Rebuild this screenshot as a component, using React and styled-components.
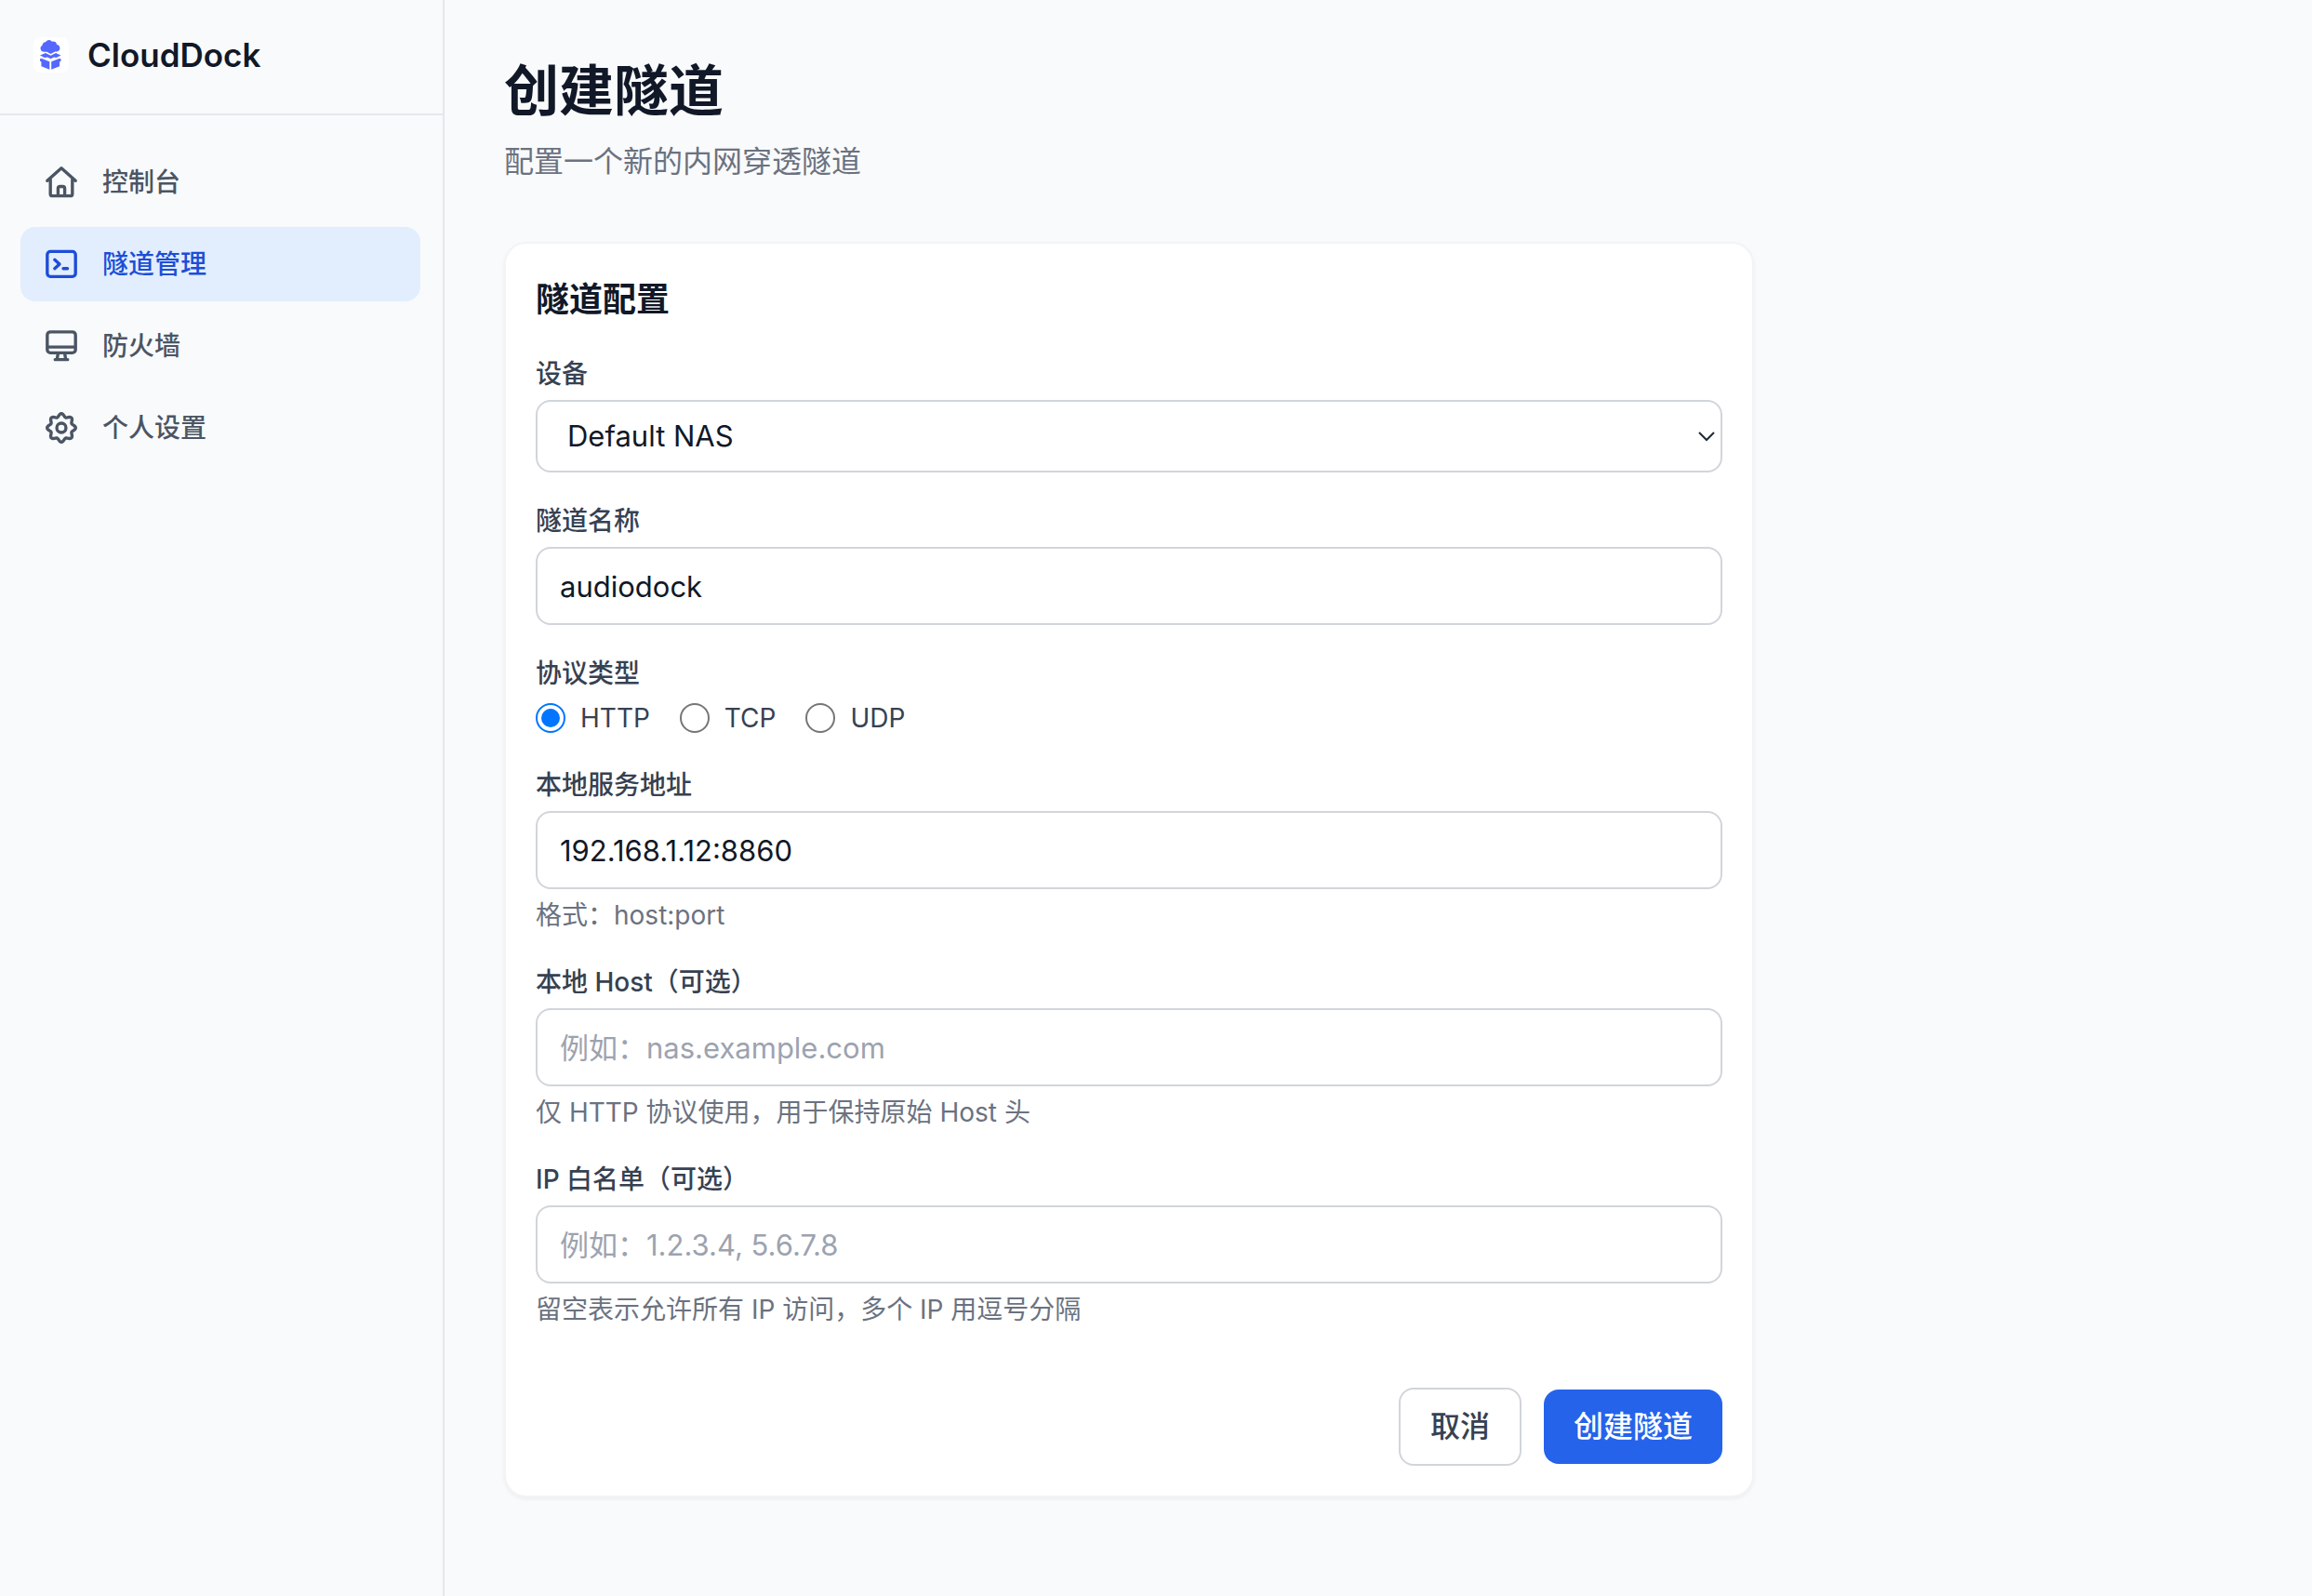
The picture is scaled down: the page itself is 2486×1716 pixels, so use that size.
import React from 'react'

import styled, { createGlobalStyle } from 'styled-components'

export default () =>
  <StyledPage>
    <GlobalStyle />
    <StyledSidebar>
      <StyledBrand>
        <Logo />
        <StyledBrandName>CloudDock</StyledBrandName>
      </StyledBrand>
      <StyledNav>
        <NavItem icon={<House />} label="控制台" />
        <NavItem icon={<Terminal />} label="隧道管理" active />
        <NavItem icon={<Display />} label="防火墙" />
        <NavItem icon={<Gear />} label="个人设置" />
      </StyledNav>
    </StyledSidebar>
    <StyledMain>
      <StyledH1>创建隧道</StyledH1>
      <StyledSubtitle>配置一个新的内网穿透隧道</StyledSubtitle>
      <StyledCard onSubmit={e => e.preventDefault()}>
        <StyledH2>隧道配置</StyledH2>
        <Field id="device" label="设备">
          <StyledSelectWrap>
            <StyledSelect id="device" defaultValue="default">
              <option value="default">Default NAS</option>
            </StyledSelect>
            <StyledChevron viewBox="0 0 20 12">
              <path d="M2 2l8 8 8-8" />
            </StyledChevron>
          </StyledSelectWrap>
        </Field>
        <Field id="name" label="隧道名称">
          <StyledInput id="name" defaultValue="audiodock" />
        </Field>
        <StyledFieldset>
          <StyledLegend>协议类型</StyledLegend>
          <StyledRadios>
            {['HTTP', 'TCP', 'UDP'].map(protocol =>
              <StyledRadioLabel key={protocol}>
                <StyledRadio name="protocol" value={protocol} defaultChecked={protocol === 'HTTP'} />
                {protocol}
              </StyledRadioLabel>
            )}
          </StyledRadios>
        </StyledFieldset>
        <Field id="address" label="本地服务地址" hint="格式：host:port">
          <StyledInput id="address" defaultValue="192.168.1.12:8860" />
        </Field>
        <Field id="host" label="本地 Host（可选）" hint="仅 HTTP 协议使用，用于保持原始 Host 头">
          <StyledInput id="host" placeholder="例如：nas.example.com" />
        </Field>
        <Field id="whitelist" label="IP 白名单（可选）" hint="留空表示允许所有 IP 访问，多个 IP 用逗号分隔">
          <StyledInput id="whitelist" placeholder="例如：1.2.3.4, 5.6.7.8" />
        </Field>
        <StyledActions>
          <StyledCancel type="button">取消</StyledCancel>
          <StyledSubmit type="submit">创建隧道</StyledSubmit>
        </StyledActions>
      </StyledCard>
    </StyledMain>
  </StyledPage>

const NavItem = ({ icon, label, active }) =>
  <StyledNavItem href="#" $active={active}>
    {icon}
    <span>{label}</span>
  </StyledNavItem>

const Field = ({ id, label, hint, children }) =>
  <StyledField>
    <StyledLabel htmlFor={id}>{label}</StyledLabel>
    {children}
    {hint && <StyledHint>{hint}</StyledHint>}
  </StyledField>

const Logo = () =>
  <StyledLogo viewBox="0 0 38 38">
    <path d="M10.500 15.500A3.600 3.600 0 0 1 9.500 8.700 4 4 0 0 1 13 5.200a4 4 0 0 1 7-.4 3.500 3.500 0 0 1 5 3.200 3.800 3.800 0 0 1 1 7.300c-1.500.4-2.600 0-3.700.6L18.500 18l-4-2.200c-1.200-.4-2.700.1-4-.3z" />
    <path d="M7 19.500l6-2.500 5.500 2.700L24 17l5.500 2.500-5 2.500-2.500-.5-3.500 1.800-3.500-1.800-3 .5z" />
    <path d="M7 23.200l2-.2 8.300 3.200v8.600L8.400 31.300V26.500L7 25.500z" />
    <path d="M29.500 23.200l-2-.2-8.300 3.200v8.600l8.900-3.500v-4.800l1.400-1z" />
  </StyledLogo>

const House = () =>
  <StyledIcon viewBox="0 0 16 16">
    <path d="M1.250 7.250L8 1.250l6.750 6M2.750 6.500v7a1 1 0 0 0 1 1h8.500a1 1 0 0 0 1-1v-7M6.400 14.250V11a1 1 0 0 1 1-1h1.200a1 1 0 0 1 1 1v3.250" />
  </StyledIcon>

const Terminal = () =>
  <StyledIcon viewBox="0 0 16 16">
    <rect x="1.250" y="1.950" width="13.500" height="12" rx="1.500" />
    <path d="M4.800 5.900l2.300 2.100-2.300 2.100M8.900 10.100h2" />
  </StyledIcon>

const Display = () =>
  <StyledIcon viewBox="0 0 16 16">
    <rect x="1.250" y="1.250" width="13.500" height="10" rx="1.500" />
    <path d="M1.500 8.500h13M6.400 11.500L6 14M9.600 11.500L10 14M5 14.500h6" />
  </StyledIcon>

const Gear = () =>
  <StyledIcon viewBox="0 0 16 16">
    <circle cx="8" cy="8" r="2.200" />
    <path d={gearPath} />
  </StyledIcon>

// eight soft teeth around the centre of a 16 unit box
const gearPath = 'M' + Array.from({ length: 96 }, (_, i) => {
  const angle = i * Math.PI / 48
  const radius = 6.05 + 0.75 * Math.cos(8 * angle)
  return `${(8 + radius * Math.sin(angle)).toFixed(2)} ${(8 - radius * Math.cos(angle)).toFixed(2)}`
}).join('L') + 'Z'

const GlobalStyle = createGlobalStyle`
  * {
    box-sizing: border-box;
  }

  body {
    margin: 0;
    background: #f9fafc;
    color: #111827;
    font-family: Inter, 'Noto Sans CJK SC', sans-serif;
    font-size: 32px;
    line-height: 48px;
    -webkit-font-smoothing: antialiased;
  }

  input, select, button {
    font: inherit;
    color: inherit;
    margin: 0;
  }
`

const StyledPage = styled.div`
  display: flex;
  min-height: 100vh;
`

const StyledSidebar = styled.aside`
  width: 478px;
  flex-shrink: 0;
  border-right: 2px solid #e5e7eb;
`

const StyledBrand = styled.div`
  display: flex;
  align-items: center;
  gap: 20px;
  height: 124px;
  padding: 0 36px 4px;
  border-bottom: 2px solid #e5e7eb;
`

const StyledLogo = styled.svg`
  width: 38px;
  height: 38px;
  border-radius: 8px;
  background: #fff;
  fill: #5468ff;
`

const StyledBrandName = styled.span`
  font-size: 35px;
  font-weight: 600;
`

const StyledNav = styled.nav`
  display: flex;
  flex-direction: column;
  gap: 8px;
  padding: 32px 24px 32px 22px;
`

const StyledNavItem = styled.a`
  display: flex;
  align-items: center;
  gap: 26px;
  height: 80px;
  padding: 0 26px;
  border-radius: 16px;
  background: ${({ $active }) => $active ? '#e2eefd' : 'transparent'};
  color: ${({ $active }) => $active ? '#1d4ed8' : '#4b5563'};
  font-size: 28px;
  font-weight: 500;
  line-height: 40px;
  text-decoration: none;
`

const StyledIcon = styled.svg`
  width: 36px;
  height: 36px;
  fill: none;
  stroke: currentColor;
  stroke-width: 1.5;
  stroke-linecap: round;
  stroke-linejoin: round;
`

const StyledMain = styled.main`
  flex: 1;
  padding: 62px 64px;
`

const StyledH1 = styled.h1`
  margin: 0;
  font-size: 59px;
  font-weight: 700;
  line-height: 72px;
`

const StyledSubtitle = styled.p`
  margin: 16px 0 62px;
  color: #6b7280;
`

const StyledCard = styled.form`
  display: flex;
  flex-direction: column;
  gap: 32px;
  max-width: 1344px;
  padding: 32px;
  border: 2px solid #f3f4f6;
  border-radius: 24px;
  background: #fff;
  box-shadow: 0 2px 4px rgba(0, 0, 0, .05);
`

const StyledH2 = styled.h2`
  margin: 0;
  font-size: 36px;
  font-weight: 600;
  line-height: 56px;
`

const StyledField = styled.div`
  display: flex;
  flex-direction: column;
  gap: 8px;
`

const StyledFieldset = styled.fieldset`
  margin: 0;
  padding: 0;
  border: none;
`

const StyledLabel = styled.label`
  color: #374151;
  font-size: 28px;
  font-weight: 500;
  line-height: 40px;
`

const StyledLegend = styled.legend`
  padding: 0;
  color: #374151;
  font-size: 28px;
  font-weight: 500;
  line-height: 40px;
`

const StyledHint = styled.p`
  margin: 0;
  color: #6b7280;
  font-size: 28px;
  line-height: 40px;
`

const StyledInput = styled.input`
  width: 100%;
  height: 84px;
  padding: 0 24px;
  border: 2px solid #d1d5db;
  border-radius: 16px;
  background: #fff;
  font-size: 31px;

  &::placeholder {
    color: #9ca3af;
    opacity: 1;
  }
`

const StyledSelectWrap = styled.div`
  position: relative;
`

const StyledSelect = styled.select`
  display: block;
  appearance: none;
  width: 100%;
  height: 78px;
  padding: 0 32px;
  border: 2px solid #d1d5db;
  border-radius: 16px;
  background: #fff;
  font-size: 31px;
`

const StyledChevron = styled.svg`
  position: absolute;
  right: 7px;
  top: 33px;
  width: 20px;
  height: 12px;
  fill: none;
  stroke: #1f2937;
  stroke-width: 2;
  pointer-events: none;
`

const StyledRadios = styled.div`
  display: flex;
  gap: 32px;
  margin-top: 8px;
`

const StyledRadioLabel = styled.label`
  display: flex;
  align-items: center;
  gap: 16px;
  color: #374151;
  font-size: 28px;
  line-height: 40px;
`

const StyledRadio = styled.input.attrs({ type: 'radio' })`
  appearance: none;
  display: grid;
  place-items: center;
  width: 32px;
  height: 32px;
  border: 2px solid #767676;
  border-radius: 50%;
  background: #fff;

  &:checked {
    border-color: #0075ff;
  }

  &:checked::before {
    content: '';
    width: 20px;
    height: 20px;
    border-radius: 50%;
    background: #0075ff;
  }
`

const StyledActions = styled.div`
  display: flex;
  justify-content: flex-end;
  align-items: center;
  gap: 24px;
  padding-top: 32px;
`

const StyledButton = styled.button`
  padding: 16px 32px;
  border: none;
  border-radius: 16px;
  font-weight: 500;
`

const StyledCancel = styled(StyledButton)`
  border: 2px solid #d1d5db;
  background: #fff;
  color: #374151;
`

const StyledSubmit = styled(StyledButton)`
  background: #2563eb;
  color: #fff;
`
